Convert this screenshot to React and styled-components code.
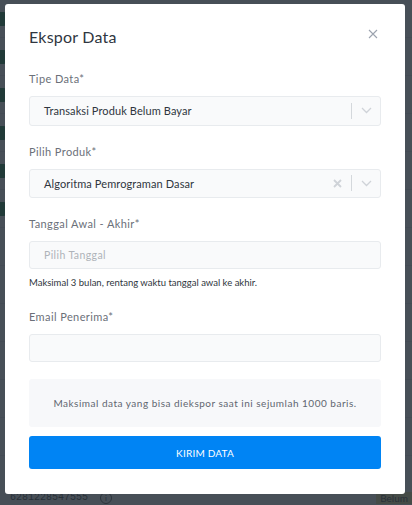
import React from 'react';
import styled, { createGlobalStyle } from 'styled-components';

const GlobalStyle = createGlobalStyle`
  * { box-sizing: border-box; }
  body {
    margin: 0;
    background: #ffffff;
    font-family: Lato, "Open Sans", sans-serif;
    overflow: hidden;
  }
`;

const rows = [0, 1, 2, 3, 4, 5, 6, 7, 8, 9, 10, 11];

const App = () => {
  return (
    <>
      <GlobalStyle />
      <Page>
        {rows.map((r) => (
          <Row key={r}>
            <Tag $show={r < 6} />
          </Row>
        ))}
        <Row $last>
          <Phone>6281228547555</Phone>
          <InfoDot>i</InfoDot>
          <Status>Belum</Status>
        </Row>
      </Page>
      <Overlay>
        <Modal>
          <Header>
            <Title>Ekspor Data</Title>
            <CloseButton aria-label="close">
              <svg width="10" height="10" viewBox="0 0 10 10">
                <path d="M1 1 L9 9 M9 1 L1 9" stroke="#9ca3af" strokeWidth="1.1" />
              </svg>
            </CloseButton>
          </Header>

          <Label>Tipe Data*</Label>
          <SelectBox>
            <Value>Transaksi Produk Belum Bayar</Value>
            <Indicators>
              <Divider />
              <Chevron />
            </Indicators>
          </SelectBox>

          <Label>Pilih Produk*</Label>
          <SelectBox>
            <Value>Algoritma Pemrograman Dasar</Value>
            <Indicators>
              <svg width="9" height="9" viewBox="0 0 9 9">
                <path d="M1 1 L8 8 M8 1 L1 8" stroke="#cfd3d8" strokeWidth="1.8" />
              </svg>
              <Divider />
              <Chevron />
            </Indicators>
          </SelectBox>

          <Label>Tanggal Awal - Akhir*</Label>
          <Input placeholder="Pilih Tanggal" $small />
          <Helper>Maksimal 3 bulan, rentang waktu tanggal awal ke akhir.</Helper>

          <Label>Email Penerima*</Label>
          <Input $small />

          <Notice>Maksimal data yang bisa diekspor saat ini sejumlah 1000 baris.</Notice>
          <SubmitButton>KIRIM DATA</SubmitButton>
        </Modal>
      </Overlay>
    </>
  );
};

const Chevron = () => (
  <svg width="11" height="7" viewBox="0 0 11 7">
    <path d="M1 1 L5.5 5.5 L10 1" fill="none" stroke="#cfd3d8" strokeWidth="1.3" />
  </svg>
);

const Page = styled.div`
  display: flex;
  flex-direction: column;
`;

const Row = styled.div`
  height: ${(p) => (p.$last ? '48px' : '38px')};
  border-bottom: ${(p) => (p.$last ? 'none' : '1px solid #e6e9ed')};
  display: flex;
  align-items: ${(p) => (p.$last ? 'flex-end' : 'center')};
  padding: ${(p) => (p.$last ? '0 0 0 10px' : '0')};
  gap: 12px;
  font-size: 12px;
  color: #555;
`;

const Tag = styled.span`
  visibility: ${(p) => (p.$show ? 'visible' : 'hidden')};
  width: 6px;
  height: 14px;
  background: #2e8b57;
  border-radius: 0 2px 2px 0;
`;

const Phone = styled.span`
  font-family: "Liberation Mono", monospace;
  font-size: 10px;
  line-height: 12px;
  width: 78px;
`;

const InfoDot = styled.span`
  width: 12px;
  height: 12px;
  border-radius: 50%;
  border: 1px solid #666;
  font-size: 8px;
  line-height: 10px;
  display: flex;
  align-items: center;
  justify-content: center;
`;

const Status = styled.span`
  margin-left: auto;
  background: #f5e6a8;
  color: #555;
  font-size: 10px;
  line-height: 12px;
  padding: 0 4px;
`;

const Overlay = styled.div`
  position: fixed;
  inset: 0;
  background: rgba(30, 40, 50, 0.82);
  display: flex;
  justify-content: flex-start;
  padding: 4px 0 0 5px;
`;

const Modal = styled.div`
  width: 400px;
  height: 490px;
  background: #ffffff;
  border-radius: 3px;
  padding: 21px 24px 25px;
  display: flex;
  flex-direction: column;
`;

const Header = styled.div`
  display: flex;
  align-items: center;
  justify-content: space-between;
  height: 24px;
  margin-bottom: 23px;
`;

const Title = styled.h2`
  margin: 0;
  font-size: 16px;
  font-weight: 400;
  color: #2f3640;
  letter-spacing: 0.2px;
`;

const CloseButton = styled.button`
  border: none;
  background: none;
  padding: 0;
  margin-right: 3px;
  margin-top: -6px;
  display: flex;
`;

const Label = styled.label`
  display: block;
  font-size: 11px;
  line-height: 14px;
  color: #6b7079;
  letter-spacing: 0.4px;
  margin-bottom: 10px;
`;

const SelectBox = styled.div`
  height: 30px;
  border: 1px solid #e8ebee;
  border-radius: 3px;
  background: #f9fafb;
  display: flex;
  align-items: center;
  padding-left: 14px;
  margin-bottom: 19px;
`;

const Value = styled.span`
  flex: 1;
  font-size: 11px;
  color: #2f3640;
  letter-spacing: 0.1px;
`;

const Indicators = styled.div`
  display: flex;
  align-items: center;
  gap: 9px;
  padding-right: 8px;
`;

const Divider = styled.span`
  width: 1px;
  height: 16px;
  background: #d4d8dc;
`;

const Input = styled.input`
  height: 28px;
  border: 1px solid #e8ebee;
  border-radius: 3px;
  background: #f9fafb;
  padding: 0 14px;
  font-family: inherit;
  font-size: 10.5px;
  letter-spacing: 0.4px;
  outline: none;
  margin-bottom: ${(p) => (p.$small ? '8px' : '19px')};
  &::placeholder {
    color: #aeb3b9;
  }
`;

const Helper = styled.p`
  margin: 0 0 21px;
  font-size: 9.5px;
  line-height: 12px;
  color: #2f3640;
`;

const Notice = styled.div`
  margin-top: 9px;
  height: 49px;
  background: #f7f8fa;
  border-radius: 3px;
  display: flex;
  align-items: center;
  justify-content: center;
  font-size: 10px;
  color: #5f6670;
  letter-spacing: 0.5px;
`;

const SubmitButton = styled.button`
  margin-top: 9px;
  height: 33px;
  border: none;
  border-radius: 3px;
  background: #0084f4;
  color: #ffffff;
  font-family: inherit;
  font-size: 10px;
  letter-spacing: 0.2px;
`;

export default App;
